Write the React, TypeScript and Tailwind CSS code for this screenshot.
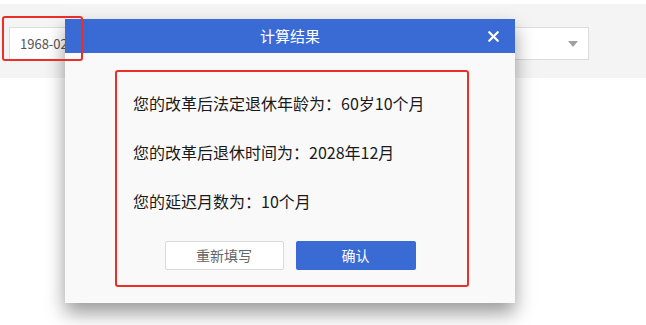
import { X } from "lucide-react"

const lines = [
  "您的改革后法定退休年龄为：60岁10个月",
  "您的改革后退休时间为：2028年12月",
  "您的延迟月数为：10个月",
]

export default function App() {
  return (
    <div className="relative w-[646px] h-[325px] overflow-hidden bg-white font-['Noto_Sans_CJK_SC','Noto_Sans',sans-serif]">
      {/* form band */}
      <div className="mt-[4px] h-[74px] bg-[#f4f4f4] pt-[23px] pl-[9px] flex gap-[10px]">
        <div className="w-[190px] h-[34px] bg-white border border-[#dcdcdc] flex items-center pl-[10px] text-[13px] text-[#555]">
          1968-02
        </div>
        <div className="w-[380px] h-[33px] bg-white border border-[#dcdcdc] flex items-center justify-end pr-[10px]">
          <div className="w-0 h-0 border-l-[5px] border-r-[5px] border-t-[6px] border-l-transparent border-r-transparent border-t-[#a0a0a0]" />
        </div>
      </div>

      {/* result dialog */}
      <div className="absolute left-[65px] top-[19px] w-[450px] h-[284px] bg-[#f9f9f9] shadow-[0_10px_18px_rgba(0,0,0,0.4)] flex flex-col">
        <div className="relative h-[34px] bg-[#3a6bd5] flex items-center justify-center text-white text-[15px]">
          计算结果
          <X className="absolute right-[13px] top-[9px] w-[17px] h-[17px]" strokeWidth={3.2} />
        </div>
        <div className="pt-[38px] pl-[68px] text-[16px] text-[#1a1a1a]">
          {lines.map((line) => (
            <p key={line} className="h-[49px] leading-[24px]">
              {line}
            </p>
          ))}
        </div>
        <div className="mt-[3px] flex justify-center gap-[12px] text-[14px]">
          <button className="w-[119px] h-[29px] bg-white border border-[#dadada] rounded-[2px] text-[#666]">
            重新填写
          </button>
          <button className="w-[120px] h-[29px] bg-[#3a6bd5] rounded-[2px] text-white">
            确认
          </button>
        </div>
      </div>

      {/* annotation marks */}
      <div className="absolute left-[2px] top-[16px] w-[81px] h-[45px] border-2 border-[#ea2f28] rounded-[3px]" />
      <div className="absolute left-[115px] top-[70px] w-[354px] h-[217px] border-2 border-[#ea2f28] rounded-[3px]" />
    </div>
  )
}
